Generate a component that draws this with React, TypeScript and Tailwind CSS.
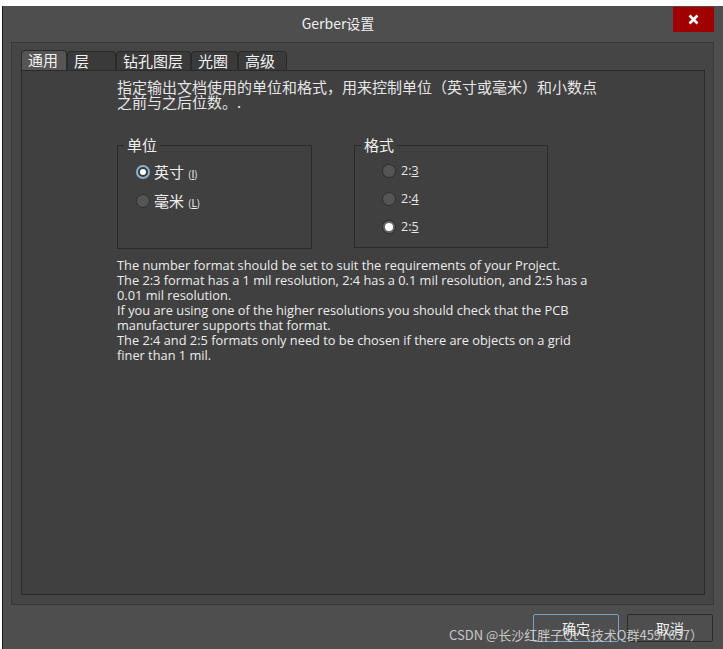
import React from "react";

const cjk = { fontFamily: '"Noto Sans CJK SC", "Noto Sans", sans-serif' };

type RadioProps = { checked?: boolean; focus?: boolean };

const Radio: React.FC<RadioProps> = ({ checked, focus }) => {
    if (checked && focus) {
        return (
            <div className="w-[14px] h-[14px] rounded-full border-2 border-[#8db0cf] bg-[#3a3a3a] flex items-center justify-center">
                <div className="w-[6px] h-[6px] rounded-full bg-white" />
            </div>
        );
    }
    if (checked) {
        return (
            <div className="w-[14px] h-[14px] rounded-full border border-[#2a2a2a] bg-[#666] flex items-center justify-center">
                <div className="w-[8px] h-[8px] rounded-full bg-white" />
            </div>
        );
    }
    return <div className="w-[14px] h-[14px] rounded-full border border-[#2e2e2e] bg-[#555]" />;
};

const tabs = [
    { text: "通用", w: "w-[46px]", active: true },
    { text: "层", w: "w-[49px]" },
    { text: "钻孔图层", w: "w-[75px]" },
    { text: "光圈", w: "w-[47px]" },
    { text: "高级", w: "w-[49px]" },
];

const helpLines = [
    "The number format should be set to suit the requirements of your Project.",
    "The 2:3 format has a 1 mil resolution, 2:4 has a 0.1 mil resolution, and 2:5 has a",
    "0.01 mil resolution.",
    "If you are using one of the higher resolutions you should check that the PCB",
    "manufacturer supports that format.",
    "The 2:4 and 2:5 formats only need to be chosen if there are objects on a grid",
    "finer than 1 mil.",
];

const GroupBox: React.FC<{ title: string; className: string; inner: string; children: React.ReactNode }> = ({
    title,
    className,
    inner,
    children,
}) => (
    <div className={`${className} border border-[#2a2a2a]`}>
        <div className="-mt-[10px] ml-[6px] px-[3px] w-fit bg-[#404040] text-[15px] leading-[18px] text-[#f0f0f0]">
            {title}
        </div>
        <div className={inner}>{children}</div>
    </div>
);

const App: React.FC = () => {
    return (
        <div className="w-[723px] h-[649px] bg-white pt-[6px] pl-[2px] relative overflow-hidden" style={cjk}>
            <div className="h-full bg-[#4e4e4e] border-l border-[#1c1c1c] flex flex-col">
                {/* title bar */}
                <div className="h-[36px] flex items-start">
                    <div className="flex-1 text-center text-[14px] leading-[18px] pt-[8px] text-[#f0f0f0]">
                        Gerber设置
                    </div>
                    <div className="w-[41px] h-[25px] mt-[1px] mr-[9px] bg-[#a10000] flex items-center justify-center">
                        <svg width="11" height="11" viewBox="0 0 11 11">
                            <path d="M1.5 1.5 L9.5 9.5 M9.5 1.5 L1.5 9.5" stroke="#fff" strokeWidth="2.6" />
                        </svg>
                    </div>
                </div>

                {/* outer frame */}
                <div className="ml-[8px] w-[703px] h-[563px] border border-[#383838] bg-[#454545] pl-[9px] pr-[8px] pt-[7px] pb-[9px] flex flex-col">
                    <div className="flex h-[20px] items-end">
                        {tabs.map((t) => (
                            <div
                                key={t.text}
                                className={`${t.w} ${
                                    t.active ? "h-[20px] bg-[#555]" : "h-[19px] bg-[#3a3a3a]"
                                } rounded-t-[4px] border border-b-0 border-[#2a2a2a] text-[15px] leading-[18px] text-[#f2f2f2] pl-[6px]`}
                            >
                                {t.text}
                            </div>
                        ))}
                    </div>
                    <div className="flex-1 bg-[#404040] border border-[#2a2a2a] pl-[95px] pt-[8px]">
                        <div className="text-[15px] leading-[15px] text-[#e6e6e6] w-[540px]">
                            <div>指定输出文档使用的单位和格式，用来控制单位（英寸或毫米）和小数点</div>
                            <div>之前与之后位数。.</div>
                        </div>

                        <div className="flex gap-[42px] mt-[36px]">
                            <GroupBox title="单位" className="w-[195px] h-[104px]" inner="pl-[18px]">
                                <div className="flex items-center gap-[4px] mt-[9px] h-[18px]">
                                    <Radio checked focus />
                                    <span className="text-[15px] text-[#f0f0f0]">英寸</span>
                                    <span className="text-[10px] text-[#f0f0f0] mt-[3px]">
                                        (<span className="underline">I</span>)
                                    </span>
                                </div>
                                <div className="flex items-center gap-[4px] mt-[11px] h-[18px]">
                                    <Radio />
                                    <span className="text-[15px] text-[#f0f0f0]">毫米</span>
                                    <span className="text-[10px] text-[#f0f0f0] mt-[3px]">
                                        (<span className="underline">L</span>)
                                    </span>
                                </div>
                            </GroupBox>
                            <GroupBox title="格式" className="w-[194px] h-[103px]" inner="pl-[27px]">
                                {["3", "4", "5"].map((n, i) => (
                                    <div
                                        key={n}
                                        className={`flex items-center gap-[5px] h-[18px] ${i === 0 ? "mt-[8px]" : "mt-[10px]"}`}
                                        style={{ fontFamily: '"Open Sans", sans-serif' }}
                                    >
                                        <Radio checked={n === "5"} />
                                        <span className="text-[12.5px] text-[#e6e6e6]">
                                            2:<span className="underline">{n}</span>
                                        </span>
                                    </div>
                                ))}
                            </GroupBox>
                        </div>

                        <div
                            className="mt-[9px] text-[12.8px] leading-[15px] text-[#ececec]"
                            style={{ fontFamily: '"Open Sans", sans-serif' }}
                        >
                            {helpLines.map((l) => (
                                <div key={l}>{l}</div>
                            ))}
                        </div>
                    </div>
                </div>

                {/* buttons */}
                <div className="flex justify-end gap-[8px] pr-[10px] mt-[9px]">
                    <div className="w-[86px] h-[28px] border border-[#7c9fc2] rounded-[2px] bg-[#4e4e4e] flex items-center justify-center text-[14px] text-[#f0f0f0]">
                        确定
                    </div>
                    <div className="w-[86px] h-[28px] border border-[#2a2a2a] rounded-[2px] bg-[#4e4e4e] flex items-center justify-center text-[14px] text-[#f0f0f0]">
                        取消
                    </div>
                </div>
            </div>

            {/* watermark */}
            <div className="absolute left-[449px] top-[626px] text-[13px] leading-[18px] text-[#e8e8e8]/80 whitespace-nowrap">
                CSDN @长沙红胖子Qt（技术Q群4597637）
            </div>
        </div>
    );
};

export default App;
